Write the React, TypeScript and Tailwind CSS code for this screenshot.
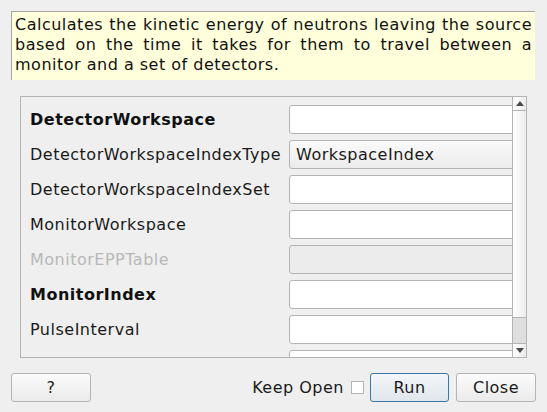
import React from "react";

const rows: { label: string; kind: "bold" | "normal" | "disabled"; value?: string; combo?: boolean }[] = [
  { label: "DetectorWorkspace", kind: "bold" },
  { label: "DetectorWorkspaceIndexType", kind: "normal", value: "WorkspaceIndex", combo: true },
  { label: "DetectorWorkspaceIndexSet", kind: "normal" },
  { label: "MonitorWorkspace", kind: "normal" },
  { label: "MonitorEPPTable", kind: "disabled" },
  { label: "MonitorIndex", kind: "bold" },
  { label: "PulseInterval", kind: "normal" },
  { label: "", kind: "normal" },
];

function Field({ kind, value, combo }: { kind: string; value?: string; combo?: boolean }) {
  const bg =
    kind === "disabled"
      ? "bg-[#ececec]"
      : combo
      ? "bg-gradient-to-b from-[#fafafa] to-[#ececec]"
      : "bg-white";
  return (
    <div
      className={`h-[29px] w-[240px] shrink-0 rounded-[3px] border border-[#b4b4b4] ${bg} flex items-center pl-[6px] text-[16px] tracking-[0.5px] text-[#1a1a1a]`}
    >
      {value}
    </div>
  );
}

export default function App() {
  return (
    <div
      className="w-[547px] h-[412px] bg-[#efefef] flex flex-col pl-[11px] pt-[11px] text-[#1a1a1a] overflow-hidden"
      style={{ fontFamily: '"DejaVu Sans", sans-serif' }}
    >
      {/* description */}
      <div className="w-[524px] h-[69px] shrink-0 border-t border-l border-[#a4a4a4] bg-[#ffffdc] pl-[3px] pr-[3px] pt-[3px] text-[16px] tracking-[0.5px] leading-[20px] text-justify text-[#111]">
        Calculates the kinetic energy of neutrons leaving the source based on the time it takes for them to travel between a monitor and a set of detectors.
      </div>

      {/* property table */}
      <div className="ml-[9px] mt-[16px] w-[507px] h-[262px] shrink-0 border border-[#b4b4b4] flex overflow-hidden">
        <div className="flex-1 overflow-hidden pt-[8px] pl-[9px]">
          <div className="flex flex-col gap-[6px]">
            {rows.map((r, i) => (
              <div key={i} className="flex items-center h-[29px]">
                <div
                  className={`w-[259px] shrink-0 text-[16px] tracking-[0.5px] whitespace-nowrap ${
                    r.kind === "bold"
                      ? "font-bold text-[#111]"
                      : r.kind === "disabled"
                      ? "text-[#b8b8b8]"
                      : "text-[#1a1a1a]"
                  }`}
                >
                  {r.label}
                </div>
                <Field kind={r.kind} value={r.value} combo={r.combo} />
              </div>
            ))}
          </div>
        </div>

        {/* scrollbar */}
        <div className="w-[14px] shrink-0 border-l border-[#b4b4b4] flex flex-col bg-gradient-to-r from-white to-[#ececec]">
          <div className="h-[14px] border-b border-[#b4b4b4] flex items-center justify-center">
            <svg width="8" height="5" viewBox="0 0 8 5">
              <path d="M4 0 L8 5 L0 5 Z" fill="#4a4a4a" />
            </svg>
          </div>
          <div className="flex-1" />
          <div className="h-[26px] border-t border-[#b4b4b4] bg-[#dedede]" />
          <div className="h-[14px] border-t border-[#b4b4b4] flex items-center justify-center">
            <svg width="8" height="5" viewBox="0 0 8 5">
              <path d="M0 0 L8 0 L4 5 Z" fill="#4a4a4a" />
            </svg>
          </div>
        </div>
      </div>

      {/* buttons */}
      <div className="mt-[15px] w-[525px] flex items-center text-[16px] tracking-[0.5px]">
        <button className="w-[80px] h-[29px] rounded-[3px] border border-[#b4b4b4] bg-gradient-to-b from-[#fbfbfb] to-[#ebebeb] text-[#1a1a1a]">
          ?
        </button>
        <div className="flex-1" />
        <span className="text-[#1a1a1a]">Keep Open</span>
        <div className="ml-[7px] w-[13px] h-[13px] border border-[#b4b4b4] bg-white" />
        <button className="ml-[6px] w-[79px] h-[29px] rounded-[3px] border border-[#3a78a8] bg-gradient-to-b from-[#f4f7fa] to-[#dfe6ec] text-[#1a1a1a]">
          Run
        </button>
        <button className="ml-[7px] w-[80px] h-[29px] rounded-[3px] border border-[#b4b4b4] bg-gradient-to-b from-[#fbfbfb] to-[#ebebeb] text-[#1a1a1a]">
          Close
        </button>
      </div>
    </div>
  );
}
